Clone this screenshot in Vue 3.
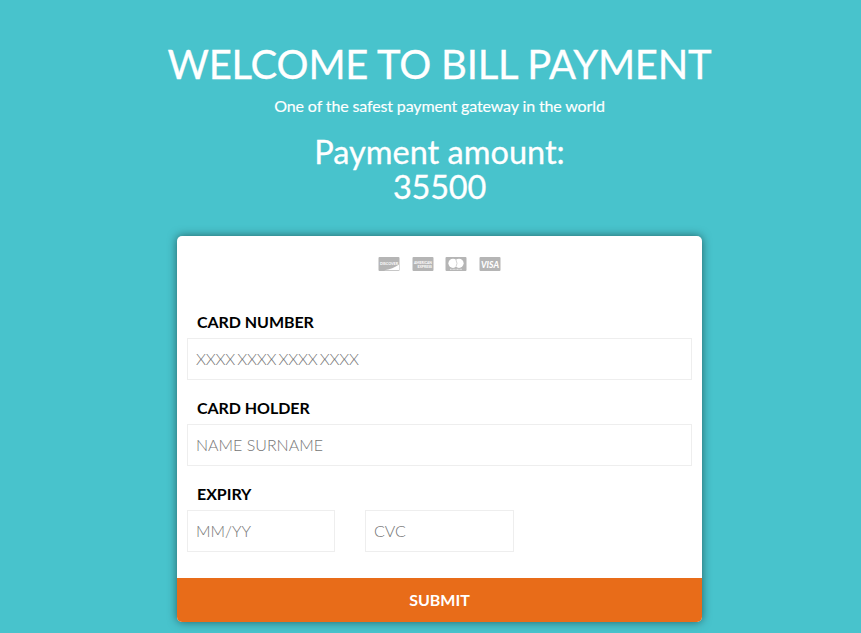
<script setup>
const cards = ['discover', 'amex', 'mastercard', 'visa']
</script>

<template>
  <main class="page">
    <header>
      <h1>WELCOME TO BILL PAYMENT</h1>
      <p>One of the safest payment gateway in the world</p>
      <h2>
        <span>Payment amount:</span>
        <span class="amount">35500</span>
      </h2>
    </header>
    <form class="card" @submit.prevent>
      <div class="brands">
        <svg v-for="c in cards" :key="c" viewBox="0 0 22 14" width="22" height="14">
          <rect x=".5" width="21" height="14" rx="1" fill="#b5b5b5" />
          <g v-if="c === 'discover'">
            <path d="M21 7.500C17 10.500 12 12.500 6 13.300H21Z" fill="#fff" />
            <text x="2" y="7.700" font-size="4.500" font-weight="700" textLength="18" lengthAdjust="spacingAndGlyphs" fill="#fff">DISCOVER</text>
          </g>
          <g v-else-if="c === 'amex'" font-weight="700" fill="#fff">
            <text x="2" y="7.300" font-size="4.300" textLength="18" lengthAdjust="spacingAndGlyphs">AMERICAN</text>
            <text x="5.500" y="11.300" font-size="4.300" textLength="14.500" lengthAdjust="spacingAndGlyphs">EXPRESS</text>
          </g>
          <g v-else-if="c === 'mastercard'" fill="#fff">
            <circle cx="8" cy="6.300" r="4.600" /><circle cx="14" cy="6.300" r="4.600" />
            <path d="M11 3Q13 6.300 11 9.800" stroke="#b5b5b5" stroke-width=".6" fill="none" />
            <path d="M5 12.300H17" stroke="#fff" stroke-width=".7" stroke-dasharray="1 .4" />
          </g>
          <text v-else x="2" y="10.500" font-size="9" font-weight="900" font-style="italic" textLength="18" lengthAdjust="spacingAndGlyphs" fill="#fff">VISA</text>
        </svg>
      </div>
      <div class="field"><label for="number">CARD NUMBER</label><input id="number" class="number" placeholder="XXXX XXXX XXXX XXXX" /></div>
      <div class="field"><label for="holder">CARD HOLDER</label><input id="holder" placeholder="NAME SURNAME" /></div>
      <div class="field">
        <label for="expiry">EXPIRY</label>
        <div class="pair"><input id="expiry" placeholder="MM/YY" /><input placeholder="CVC" /></div>
      </div>
      <button>SUBMIT</button>
    </form>
  </main>
</template>

<style>
body { background: #48c3cc; }
</style>
<style scoped>
.page { box-sizing: border-box; height: 633px; padding: 40px 0 0 18px; overflow: hidden; font-family: Lato, sans-serif; display: flex; flex-direction: column; align-items: center; }
header { color: #fff; text-align: center; height: 196px; }
h1 { margin: 0; font-size: 40px; font-weight: 400; line-height: 48px; letter-spacing: -.2px; white-space: nowrap; -webkit-text-stroke: .3px #fff; }
p { margin: 7px 0 0; font-size: 16px; line-height: 22px; letter-spacing: -.13px; -webkit-text-stroke: .15px #fff; }
h2 { margin: 17px 0 0; font-size: 32.5px; font-weight: 400; line-height: 35px; -webkit-text-stroke: .3px #fff; }
h2 span { display: block; }
.amount { letter-spacing: -.2px; }
.card { width: 525px; height: 386px; background: #fff; border-radius: 5px; overflow: hidden; box-shadow: 0 0 10px rgba(0,0,0,.5); display: flex; flex-direction: column; flex-shrink: 0; }
.brands { display: flex; justify-content: center; gap: 11.7px; padding-top: 21px; height: 51px; }
.field { height: 86px; margin: 0 10px; flex-shrink: 0; }
label { display: block; height: 30px; line-height: 28px; padding-left: 10px; font-size: 16px; font-weight: 700; letter-spacing: -.05px; }
input { box-sizing: border-box; display: block; width: 100%; height: 42px; border: 1px solid #eee; padding: 0 8px 2px; font: 300 16px Lato, sans-serif; outline: 0; }
input::placeholder { color: #757575; opacity: 1; }
.number { letter-spacing: -.2px; word-spacing: -2px; }
.pair { display: grid; grid-template-columns: 148px 149px; gap: 30px; }
button { margin-top: auto; flex-shrink: 0; height: 44px; border: 0; padding: 0 0 2px; background: #e86c19; color: #fff; font: 700 16px Lato, sans-serif; }
</style>
